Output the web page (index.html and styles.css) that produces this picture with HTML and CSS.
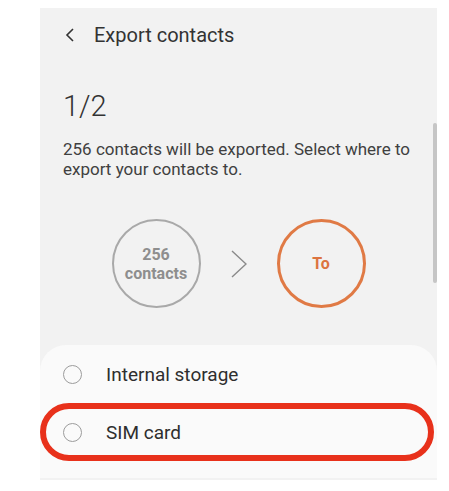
FILE: index.html
```
<!DOCTYPE html>
<html lang="en">
<head>
    <meta charset="UTF-8">
    <title>Export contacts</title>
    <link rel="stylesheet" href="styles.css">
</head>
<body>
<div class="screen">
    <header class="bar">
        <svg class="back" width="12" height="16" viewBox="0 0 12 16">
            <path d="M9 2 L3 8 L9 14" fill="none" stroke="#333" stroke-width="1.6"/>
        </svg>
        <span class="title">Export contacts</span>
    </header>
    <div class="step">1/2</div>
    <p class="desc">256 contacts will be exported. Select where to export your contacts to.</p>
    <div class="flow">
        <div class="circle from">256<br>contacts</div>
        <svg class="arrow" width="16" height="28" viewBox="0 0 16 28">
            <path d="M1 1 L15 14 L1 27" fill="none" stroke="#8a8a8a" stroke-width="1.4"/>
        </svg>
        <div class="circle to">To</div>
    </div>
    <div class="card">
        <div class="row">
            <span class="radio"></span>
            <span>Internal storage</span>
        </div>
        <div class="row marked">
            <span class="radio"></span>
            <span>SIM card</span>
        </div>
    </div>
    <div class="scroll"></div>
</div>
</body>
</html>
```

FILE: styles.css
```
body {
    margin: 0;
    background: #fff;
    font-family: Roboto, "Liberation Sans", sans-serif;
    color: #333;
}
.screen {
    position: relative;
    margin: 8px 0 0 40px;
    width: 397px;
    height: 472px;
    background: #f2f2f2;
    overflow: hidden;
}
.bar {
    display: flex;
    align-items: center;
    height: 52px;
    padding-left: 24px;
    padding-top: 1px;
    box-sizing: border-box;
}
.back {
    margin-right: 18px;
}
.title {
    font-size: 20px;
}
.step {
    margin: 29px 0 0 23px;
    font-size: 29px;
    font-weight: 300;
    line-height: 34px;
}
.desc {
    margin: 16px 20px 0 23px;
    font-size: 17px;
    line-height: 20px;
    color: #404040;
}
.flow {
    display: flex;
    align-items: center;
    justify-content: center;
    gap: 30px;
    margin-top: 40px;
}
.circle {
    width: 89px;
    height: 89px;
    box-sizing: border-box;
    border-radius: 50%;
    display: flex;
    align-items: center;
    justify-content: center;
    text-align: center;
    font-weight: 700;
    font-size: 16px;
    line-height: 19px;
}
.from {
    border: 2px solid #a9a9a9;
    color: #8e8e8e;
}
.to {
    border: 3px solid #e07a45;
    color: #dc7440;
}
.card {
    margin-top: 37px;
    background: #fafafa;
    border-radius: 26px 26px 0 0;
    padding-bottom: 17px;
}
.row {
    display: flex;
    align-items: center;
    gap: 24px;
    height: 58px;
    padding-left: 23px;
    font-size: 19px;
    color: #2e2e2e;
    box-sizing: border-box;
}
.radio {
    width: 19px;
    height: 19px;
    box-sizing: border-box;
    border: 1.6px solid #9c9c9c;
    border-radius: 50%;
}
.marked {
    width: 394px;
    border: 6px solid #e8311b;
    border-radius: 29px;
    padding-left: 17px;
}
.scroll {
    position: absolute;
    right: 0;
    top: 115px;
    width: 4px;
    height: 160px;
    border-radius: 2px;
    background: #c6c6c6;
}
```
